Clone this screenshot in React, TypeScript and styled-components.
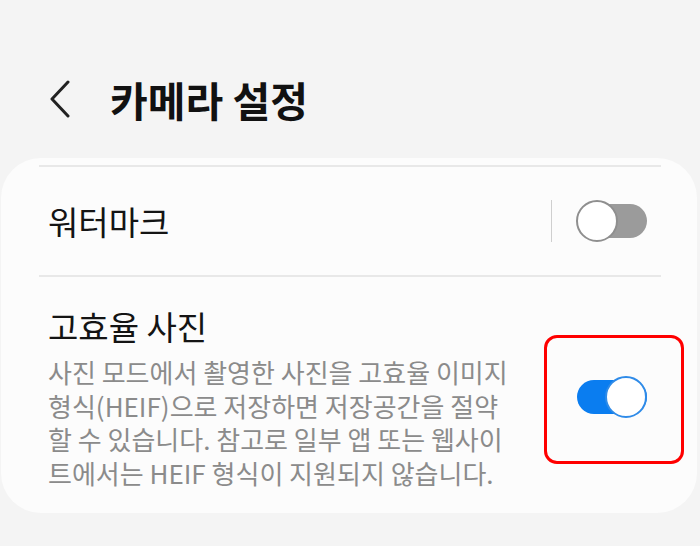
import React from 'react';
import styled, { createGlobalStyle } from 'styled-components';

const GlobalStyle = createGlobalStyle`
  html, body {
    margin: 0;
    padding: 0;
    background: #f4f4f4;
  }
  body {
    font-family: 'Noto Sans CJK KR', 'Noto Sans', sans-serif;
  }
`;

const Screen = styled.div`
  width: 700px;
  height: 546px;
  overflow: hidden;
  background: #f4f4f4;
`;

const Header = styled.header`
  height: 158px;
  box-sizing: border-box;
  padding: 40px 0 0 48px;
  display: flex;
  align-items: center;
  gap: 38px;
`;

const BackButton = styled.button`
  border: 0;
  background: none;
  padding: 0;
  width: 24px;
  height: 40px;
  display: flex;
  align-items: center;
  justify-content: center;
  color: #222;
`;

const Title = styled.h1`
  margin: 0;
  font-size: 41px;
  line-height: 56px;
  font-weight: 700;
  color: #111;
`;

const Card = styled.section`
  margin: 0 3px 0 1px;
  background: #fcfcfc;
  border-radius: 40px;
  padding: 7px 36px 0 38px;
`;

const Divider = styled.div`
  height: 2px;
  background: #e8e8e8;
`;

const Row = styled.div<{ tall?: boolean }>`
  display: flex;
  align-items: center;
  padding: ${p => (p.tall ? '27px 14px 24px 9px' : '0 14px 0 9px')};
  min-height: ${p => (p.tall ? 'auto' : '108px')};
  gap: 24px;
`;

const TextBlock = styled.div`
  flex: 1;
  min-width: 0;
`;

const RowTitle = styled.div`
  font-size: 33px;
  line-height: 44px;
  color: #141414;
`;

const RowDesc = styled.div`
  margin-top: 7px;
  font-size: 26px;
  line-height: 33.5px;
  color: #8b8b8b;
  width: 466px;
`;

const VSeparator = styled.div`
  width: 1.5px;
  height: 42px;
  background: #cfcfcf;
`;

const SwitchWrap = styled.div`
  position: relative;
  width: 71px;
  height: 42px;
  flex-shrink: 0;
`;

const Track = styled.div<{ on?: boolean }>`
  position: absolute;
  left: 1px;
  right: 0;
  top: 4px;
  bottom: 4px;
  border-radius: 17px;
  background: ${p => (p.on ? '#0a7df0' : '#9b9b9b')};
`;

const Knob = styled.div<{ on?: boolean }>`
  position: absolute;
  top: 0;
  ${p => (p.on ? 'right: 0;' : 'left: 0;')}
  width: 42px;
  height: 42px;
  box-sizing: border-box;
  border-radius: 50%;
  background: #fff;
  border: 2px solid ${p => (p.on ? '#2f8be8' : '#8f8f8f')};
`;

const Highlight = styled.div`
  position: absolute;
  left: -32px;
  top: -41px;
  width: 140px;
  height: 129px;
  box-sizing: border-box;
  border: 3px solid #ff0000;
  border-radius: 13px;
  pointer-events: none;
`;

const Switch: React.FC<{ on?: boolean; highlighted?: boolean }> = ({ on, highlighted }) => (
  <SwitchWrap>
    <Track on={on} />
    <Knob on={on} />
    {highlighted && <Highlight />}
  </SwitchWrap>
);

const ChevronLeft = () => (
  <svg width="22" height="38" viewBox="0 0 22 38" fill="none">
    <path d="M19 2 L3 19 L19 36" stroke="currentColor" strokeWidth="3" strokeLinecap="round" strokeLinejoin="round" />
  </svg>
);

const App: React.FC = () => {
  return (
    <Screen>
      <GlobalStyle />
      <Header>
        <BackButton aria-label="뒤로">
          <ChevronLeft />
        </BackButton>
        <Title>카메라 설정</Title>
      </Header>

      <Card>
        <Divider />
        <Row>
          <TextBlock>
            <RowTitle>워터마크</RowTitle>
          </TextBlock>
          <VSeparator />
          <Switch />
        </Row>
        <Divider />
        <Row tall>
          <TextBlock>
            <RowTitle>고효율 사진</RowTitle>
            <RowDesc>
              사진 모드에서 촬영한 사진을 고효율 이미지 형식(HEIF)으로 저장하면 저장공간을 절약할 수 있습니다. 참고로 일부 앱 또는 웹사이트에서는 HEIF 형식이 지원되지 않습니다.
            </RowDesc>
          </TextBlock>
          <Switch on highlighted />
        </Row>
      </Card>
    </Screen>
  );
};

export default App;
